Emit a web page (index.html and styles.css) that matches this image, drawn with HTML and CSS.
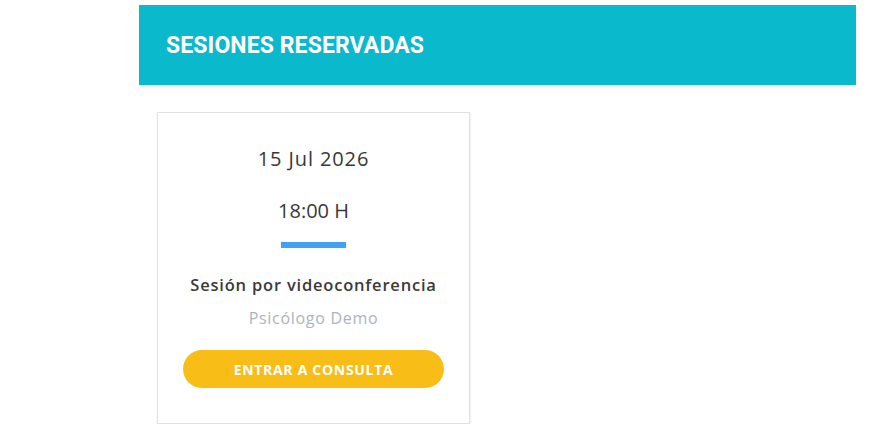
FILE: index.html
```html
<!DOCTYPE html>
<html lang="es">
<head>
    <meta charset="UTF-8">
    <meta name="viewport" content="width=device-width, initial-scale=1.0">
    <link rel="stylesheet" href="styles.css">
</head>
<body>

    <div class="main">
        <div class="section-head">
            <h2>SESIONES RESERVADAS</h2>
        </div>

        <div class="sessions">
            <div class="session-card">
                <p class="session-date">15 Jul 2026</p>
                <p class="session-time">18:00 H</p>
                <span class="session-bar"></span>
                <p class="session-type">Sesión por videoconferencia</p>
                <p class="session-pro">Psicólogo Demo</p>
                <a href="#" class="btn-enter">ENTRAR A CONSULTA</a>
            </div>
        </div>
    </div>

</body>
</html>
```

FILE: styles.css
```css
body {
    margin: 0;
    background-color: #fff;
    font-family: "Open Sans", Lato, sans-serif;
    color: #333;
}
.main {
    padding: 5px 34px 0 139px;
}
.section-head {
    background-color: #0bb9cd;
    height: 80px;
    display: flex;
    align-items: center;
    padding-left: 27px;
}
.section-head h2 {
    margin: 0;
    color: #fff;
    font-family: Roboto, sans-serif;
    font-weight: 700;
    font-size: 23px;
    letter-spacing: 0.1px;
}
.sessions {
    display: flex;
    padding: 27px 0 0 18px;
}
.session-card {
    width: 311px;
    height: 310px;
    border: 1px solid #e1e1e1;
    box-shadow: 1px 1px 2px rgba(0, 0, 0, 0.06);
    display: flex;
    flex-direction: column;
    align-items: center;
}
.session-card p {
    margin: 0;
    line-height: 1.3;
}
.session-date {
    margin-top: 33px !important;
    font-size: 20px;
    letter-spacing: 0.9px;
    color: #383838;
}
.session-time {
    margin-top: 26px !important;
    font-size: 20px;
    color: #383838;
}
.session-bar {
    display: block;
    width: 65px;
    height: 6px;
    margin-top: 18px;
    background-color: #43a1f2;
}
.session-type {
    margin-top: 26px !important;
    font-size: 16.5px;
    font-weight: 600;
    letter-spacing: 0.8px;
    color: #3a3a3a;
}
.session-pro {
    margin-top: 13px !important;
    font-size: 16px;
    letter-spacing: 0.7px;
    color: #adb3bd;
}
.btn-enter {
    margin-top: 21px;
    width: 261px;
    height: 38px;
    border-radius: 19px;
    background-color: #f8bd17;
    color: #fff;
    font-size: 14px;
    font-weight: 700;
    letter-spacing: 0.7px;
    text-decoration: none;
    display: flex;
    align-items: center;
    justify-content: center;
}
```
